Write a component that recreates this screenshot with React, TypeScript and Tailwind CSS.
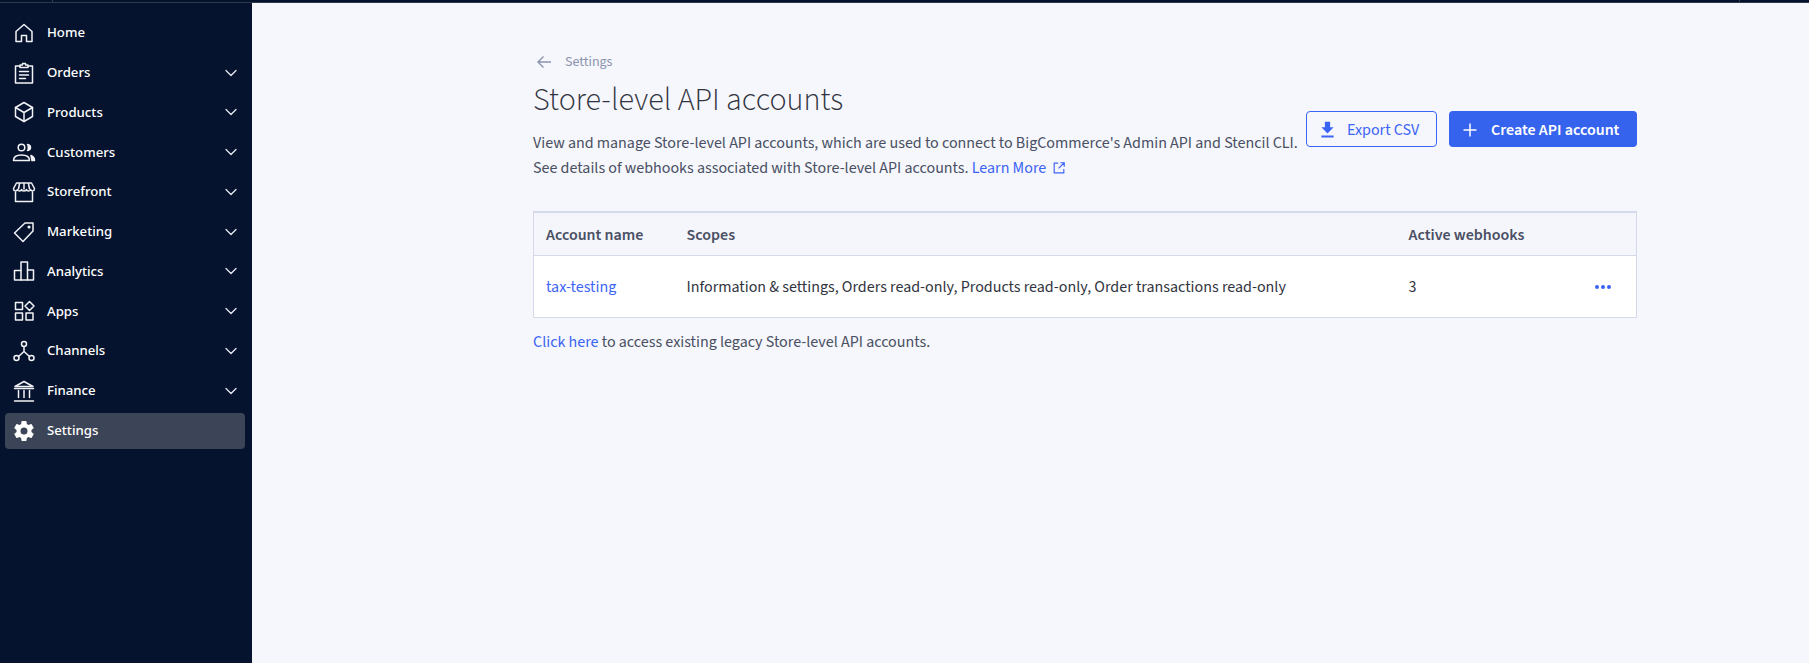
import { ChevronDown } from "lucide-react";
import type { ReactNode } from "react";

const stroke = { fill: "none", stroke: "currentColor", strokeWidth: 1.5, strokeLinejoin: "round" as const, strokeLinecap: "round" as const };

function Svg({ children }: { children: ReactNode }) {
  return (
    <svg viewBox="0 0 24 24" className="w-6 h-6 shrink-0" {...stroke}>
      {children}
    </svg>
  );
}

const navItems: { label: string; icon: ReactNode; noChevron?: boolean }[] = [
  {
    label: "Home",
    noChevron: true,
    icon: <Svg><path d="M4 20.500V10.500L12 3.500l8 7v10h-5.500v-6h-5v6z" /></Svg>,
  },
  {
    label: "Orders",
    icon: (
      <Svg>
        <path d="M8 5H3.500v17h17V5H16" />
        <path d="M8 6.500V4h2.500V2.500h3V4H16v2.500z" />
        <path d="M7.500 10.500h9M7.500 14h9M7.500 17.500h6" />
      </Svg>
    ),
  },
  {
    label: "Products",
    icon: (
      <Svg>
        <path d="M12 2.500l8.500 5v9l-8.500 5-8.500-5v-9z" />
        <path d="M3.500 7.500l8.500 5 8.500-5M12 12.500v9" />
      </Svg>
    ),
  },
  {
    label: "Customers",
    icon: (
      <Svg>
        <circle cx="9.500" cy="7.500" r="3.300" />
        <path d="M1.500 20.500c0-4 3.500-5.500 8-5.500s8 1.500 8 5.500z" />
        <path d="M15.500 4.500c2 .3 3 1.500 3 3s-1 2.700-3 3" fill="currentColor" />
        <path d="M19 15.500c2 .7 3.500 2.200 3.500 5h-2.500z" fill="currentColor" />
      </Svg>
    ),
  },
  {
    label: "Storefront",
    icon: (
      <Svg>
        <path d="M3.500 12v9.500h17V12" />
        <path d="M4.500 3h15l3 5.500c0 3-3.500 3-3.800 1 -.3 2-3.900 2-4.300 0-.4 2-4.400 2-4.800 0-.4 2-4 2-4.300 0-.3 2-3.800 2-3.800-1z" />
        <path d="M7.500 3.500l-1 5.500M12 3.500v5.500M16.500 3.500l1 5.500" />
      </Svg>
    ),
  },
  {
    label: "Marketing",
    icon: (
      <Svg>
        <path d="M13 3h8v8L11 21.500 2.500 13z" />
        <circle cx="17" cy="7" r=".8" fill="currentColor" />
      </Svg>
    ),
  },
  {
    label: "Analytics",
    icon: (
      <Svg>
        <path d="M2.500 21V11.500H9V3h6.500v8h6v10z" />
        <path d="M9 11.500V21M15.500 11V21" />
      </Svg>
    ),
  },
  {
    label: "Apps",
    icon: (
      <Svg>
        <rect x="3.500" y="3.500" width="7" height="7" />
        <rect x="3.500" y="14" width="7" height="7" />
        <rect x="14" y="14" width="7" height="7" />
        <path d="M17.500 2.500l4.500 4.500-4.500 4.500L13 7z" />
      </Svg>
    ),
  },
  {
    label: "Channels",
    icon: (
      <Svg>
        <circle cx="12" cy="5" r="2.500" />
        <circle cx="4.500" cy="19" r="2.500" />
        <circle cx="19.500" cy="19" r="2.500" />
        <path d="M12 7.500V12.500M12 12.500L6.500 17.500M12 12.500l5.500 5" />
      </Svg>
    ),
  },
  {
    label: "Finance",
    icon: (
      <Svg>
        <path d="M3 7.500L12 2.500l9 5z" />
        <path d="M6.500 11.500v7M12 11.500v7M17.500 11.500v7M2.500 22h19M2.500 9.500h19" />
      </Svg>
    ),
  },
];

function GearIcon() {
  return (
    <svg viewBox="0 0 24 24" className="w-6 h-6 shrink-0" fill="currentColor">
      <path
        fillRule="evenodd"
        d="M19.430 12.980c.04-.32.070-.640.070-.980s-.030-.660-.070-.980l2.110-1.650a.5.5 0 0 0 .120-.640l-2-3.460a.5.5 0 0 0-.610-.220l-2.490 1a7.300 7.300 0 0 0-1.690-.980l-.380-2.650A.49.49 0 0 0 14 2h-4a.49.49 0 0 0-.490.420l-.380 2.650a7.700 7.700 0 0 0-1.690.980l-2.490-1a.49.49 0 0 0-.610.220l-2 3.460a.49.49 0 0 0 .120.640l2.110 1.650c-.040.320-.070.650-.070.980s.030.660.070.980l-2.110 1.650a.5.500 0 0 0-.120.640l2 3.460c.120.220.390.300.610.220l2.490-1c.520.400 1.080.730 1.690.980l.380 2.650c.030.240.240.420.490.420h4c.250 0 .460-.180.490-.420l.380-2.650a7.700 7.700 0 0 0 1.690-.980l2.490 1c.230.090.490 0 .610-.220l2-3.460a.5.500 0 0 0-.120-.640zM12 15.500a3.500 3.500 0 1 1 0-7 3.500 3.500 0 0 1 0 7z"
      />
    </svg>
  );
}

export default function App() {
  return (
    <div className="flex flex-col min-h-[663px] bg-[#f5f7fc] font-['Noto_Sans',sans-serif] text-[#313440]">
      {/* top strip */}
      <div className="flex h-[3px] bg-[#05122c] border-b border-b-[#2c3a4c]">
        <div className="w-[53px] border-r border-r-[#2c3a4c]" />
        <div className="flex-1 border-r border-r-[#2c3a4c]" />
        <div className="w-[69px]" />
      </div>

      <div className="flex flex-1">
        {/* sidebar */}
        <aside className="w-[252px] shrink-0 bg-[#06132e] text-white pt-[10px] pl-[5px] pr-[7px]">
          <nav className="flex flex-col">
            {navItems.map((item) => (
              <div key={item.label} className="flex items-center h-[39.75px] pl-[7px] pr-[3px]">
                <span className="w-[35px] flex text-[#f2f3f6]">{item.icon}</span>
                <span className="pt-[1px] text-[13.200px] font-medium flex-1">{item.label}</span>
                {!item.noChevron && <ChevronDown className="w-[20px] h-[20px] mr-[1px] text-[#e4e6ec]" strokeWidth={1.6} />}
              </div>
            ))}
            <div className="flex items-center h-[36px] mt-[2px] pl-[7px] rounded-[4px] bg-[#3c4457]">
              <span className="w-[35px] flex"><GearIcon /></span>
              <span className="pt-[1px] text-[13.200px] font-medium">Settings</span>
            </div>
          </nav>
        </aside>

        {/* main */}
        <main className="flex-1 pl-[281px] pt-[49px] font-['Source_Sans_3','Noto_Sans',sans-serif]">
          <div className="w-[1104px]">
            <div className="flex items-center h-[20px] pl-[3px] text-[#8c93ad] text-[14px]">
              <svg viewBox="0 0 16 16" className="w-[16px] h-[16px]" fill="none" stroke="currentColor" strokeWidth="1.400">
                <path d="M15 8H2M7.500 2.500L2 8l5.500 5.500" />
              </svg>
              <span className="ml-[13px]">Settings</span>
            </div>
            <h1 className="mt-[8px] text-[32px] leading-[40px] font-light text-[#313440]">
              Store-level API accounts
            </h1>

            <div className="flex items-start justify-between">
              <p className="text-[16px] leading-[24.500px] mt-[11px] text-[#4a4f63] whitespace-nowrap">
                View and manage Store-level API accounts, which are used to connect to BigCommerce's Admin API and Stencil CLI.
                <br />
                See details of webhooks associated with Store-level API accounts.{" "}
                <a className="text-[#3c64f4]">
                  Learn More
                  <svg viewBox="0 0 16 16" className="inline-block w-[14px] h-[14px] ml-[6px] mb-[2px]" fill="none" stroke="currentColor" strokeWidth="1.300">
                    <path d="M7 2.500H2.500v11h11V9M9.500 2H14v4.500M14 2L7.500 8.500" />
                  </svg>
                </a>
              </p>
              <div className="flex gap-[12px] -mt-[9px]">
                <button className="flex items-center w-[131px] h-[36px] pl-[10px] pt-[1px] rounded-[4px] border border-[#3c64f4] text-[#3c64f4] text-[16px]">
                  <svg viewBox="0 0 24 24" className="w-[21px] h-[21px] mr-[9px]" fill="currentColor">
                    <path d="M19 9.500h-4V3H9v6.500H5l7 7zM5 18.800V21h14v-2.200z" />
                  </svg>
                  Export CSV
                </button>
                <button className="flex items-center w-[188px] h-[36px] pl-[13px] pt-[1px] rounded-[4px] bg-[#3563ee] text-white text-[16px] font-semibold">
                  <svg viewBox="0 0 16 16" className="w-[16px] h-[16px] mr-[13px]" fill="none" stroke="currentColor" strokeWidth="1.500">
                    <path d="M8 1.500v13M1.500 8h13" />
                  </svg>
                  Create API account
                </button>
              </div>
            </div>

            <table className="w-full mt-[31px] border border-[#d5daeb] border-t-2 border-collapse text-[16px] table-fixed">
              <thead>
                <tr className="h-[43px] border-b border-[#d5daeb] bg-[#f4f6fc] text-[#4a4f63] text-left">
                  <th className="w-[153px] pl-[12px] pt-[2px] font-semibold">Account name</th>
                  <th className="pt-[2px] font-semibold">Scopes</th>
                  <th className="w-[228px] pt-[2px] font-semibold">Active webhooks</th>
                </tr>
              </thead>
              <tbody>
                <tr className="h-[62px] bg-white">
                  <td className="pl-[12px] pt-[2px] text-[#3c64f4]">tax-testing</td>
                  <td className="pt-[2px] text-[#313440] whitespace-nowrap">
                    Information &amp; settings, Orders read-only, Products read-only, Order transactions read-only
                  </td>
                  <td className="pt-[2px]">
                    <div className="flex items-center justify-between pr-[25px]">
                      <span>3</span>
                      <span className="flex gap-[2px]">
                        <i className="block w-[4px] h-[4px] rounded-full bg-[#3c64f4]" />
                        <i className="block w-[4px] h-[4px] rounded-full bg-[#3c64f4]" />
                        <i className="block w-[4px] h-[4px] rounded-full bg-[#3c64f4]" />
                      </span>
                    </div>
                  </td>
                </tr>
              </tbody>
            </table>

            <p className="mt-[12px] text-[16px] leading-[24px] text-[#4a4f63]">
              <a className="text-[#3c64f4]">Click here</a> to access existing legacy Store-level API accounts.
            </p>
          </div>
        </main>
      </div>
    </div>
  );
}
